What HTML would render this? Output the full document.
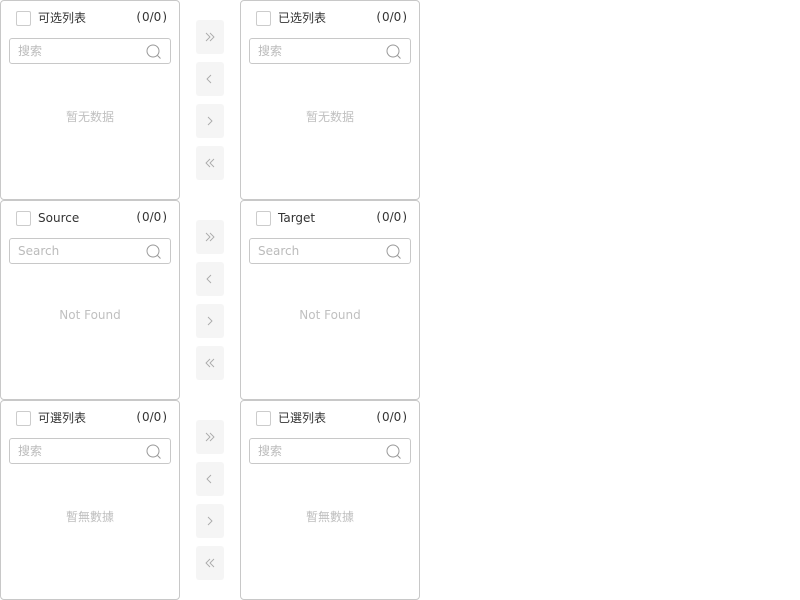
<!DOCTYPE html><html><head><meta charset="utf-8"><style>
body{margin:0;width:800px;height:600px;background:#fff;font-family:"DejaVu Sans","Noto Sans CJK SC",sans-serif;position:relative;overflow:hidden}
.p{position:absolute;width:178px;height:198px;border:1px solid #c8c8c8;border-radius:4px;background:#fff}
.cb{position:absolute;left:15px;top:10px;width:13px;height:13px;border:1px solid #ccc;border-radius:2px}
.t{position:absolute;left:37px;top:9px;font-size:12px;color:#333;line-height:16px}
.c{position:absolute;right:12px;top:8px;font-size:12px;color:#333;line-height:16px}
.c i{font-style:normal;margin:0 1px}
.s{position:absolute;left:8px;top:37px;width:160px;height:24px;border:1px solid #c8c8c8;border-radius:3px}
.s span{position:absolute;left:8px;top:5px;font-size:12px;color:#bbb;line-height:14px}
.s svg{position:absolute;right:8px;top:5px}
.e{position:absolute;left:0;right:0;top:107px;text-align:center;font-size:12px;color:#c0c0c0}
.b{position:absolute;left:196px;width:28px;height:34px;background:#f5f5f5;border-radius:3px}
.b svg{position:absolute;left:9px;top:12px}
</style></head><body>
<script>
const rows=[["可选列表","已选列表","搜索","暂无数据"],["Source","Target","Search","Not Found"],["可選列表","已選列表","搜索","暫無數據"]];
const ic=["M1 1l4 4-4 4M5 1l4 4-4 4","M6 1L2 5l4 4","M3 1l4 4-4 4","M5 1L1 5l4 4M9 1L5 5l4 4"];
let h="";
rows.forEach((r,i)=>{const y=i*200;
[0,240].forEach((x,j)=>{h+=`<div class="p" style="left:${x}px;top:${y}px"><div class="cb"></div><div class="t">${r[j]}</div><div class="c">(<i>0/0</i>)</div><div class="s"><span>${r[2]}</span><svg width="16" height="16" viewBox="0 0 16 16"><circle cx="7" cy="7" r="6" fill="none" stroke="#999" stroke-width="1"/><path d="M11.5 11.5L14.5 14.5" stroke="#999" stroke-width="1"/></svg></div><div class="e">${r[3]}</div></div>`});
ic.forEach((d,k)=>{h+=`<div class="b" style="top:${y+20+k*42}px"><svg width="10" height="10" viewBox="0 0 10 10"><path d="${d}" fill="none" stroke="#aaa" stroke-width="0.9"/></svg></div>`});
});
document.write(h);
</script>
</body></html>
